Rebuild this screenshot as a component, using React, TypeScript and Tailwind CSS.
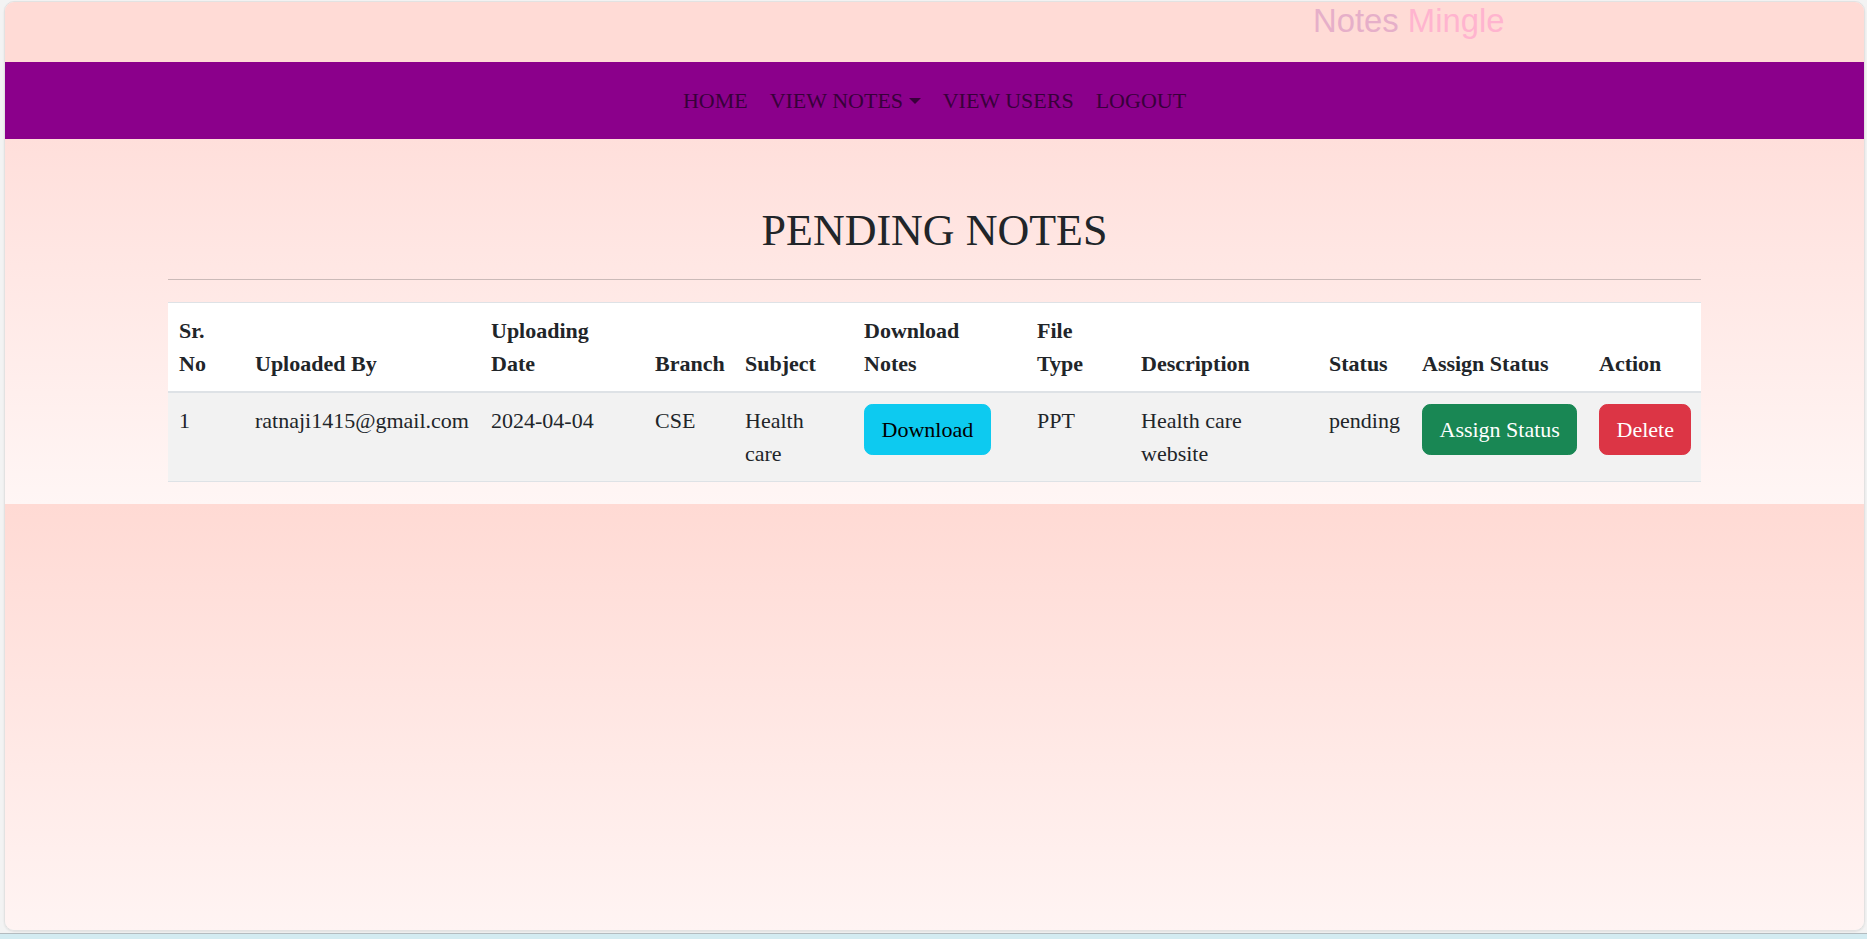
import React from "react";

const cols = [76, 236, 164, 90, 119, 173, 104, 188, 93, 177, 113];

const headers = [
  "Sr. No",
  "Uploaded By",
  "Uploading Date",
  "Branch",
  "Subject",
  "Download Notes",
  "File Type",
  "Description",
  "Status",
  "Assign Status",
  "Action",
];

export default function App() {
  return (
    <div className="w-[1867px] h-[939px] bg-[#f3f3f3] flex flex-col overflow-hidden font-['Liberation_Serif',serif] text-[#212529]">
      <div className="pt-[1px] pl-[4px]">
        <div className="w-[1861px] h-[930px] rounded-[10px] overflow-hidden border border-[#e2e2e2] shadow-[0_1px_2px_rgba(0,0,0,0.08)] flex flex-col">
          {/* top band with marquee text */}
          <div className="h-[60px] bg-[#ffdbd6] pt-[3px] pl-[1308px]">
            <div className="text-[32.8px] leading-[32px] font-['Liberation_Sans',Arial,sans-serif] whitespace-nowrap">
              <span className="text-[#e6afc9]">Notes</span>{" "}
              <span className="text-[#ffb4cf]">Mingle</span>
            </div>
          </div>
          {/* nav */}
          <nav className="h-[77px] bg-[#8b008b] flex items-center justify-center">
            <ul className="flex items-center text-[22px] leading-[33px] text-[#38003a]">
              <li className="px-[11px]">HOME</li>
              <li className="px-[11px] flex items-center">
                VIEW NOTES
                <span className="ml-[5.6px] inline-block w-0 h-0 border-t-[6.6px] border-t-[#38003a] border-l-[6.6px] border-l-transparent border-r-[6.6px] border-r-transparent" />
              </li>
              <li className="px-[11px]">VIEW USERS</li>
              <li className="px-[11px]">LOGOUT</li>
            </ul>
          </nav>
          {/* main section */}
          <section className="bg-gradient-to-b from-[#ffdfdb] to-[#fff6f5] pt-[66px]">
            <div className="w-[1533px] mx-auto">
              <h2 className="text-[44px] leading-[52.8px] text-center text-[#212529]">
                PENDING NOTES
              </h2>
              <hr className="mt-[21px] mb-[22px] border-0 border-t border-[#cbbab8]" />
              <table className="w-[1533px] table-fixed border-collapse border-t border-[#dee2e6] mb-[22px] text-[22px] leading-[33px]">
                <colgroup>
                  {cols.map((w, i) => (
                    <col key={i} style={{ width: w }} />
                  ))}
                </colgroup>
                <thead className="bg-white">
                  <tr className="border-b-2 border-[#dee2e6]">
                    {headers.map((h) => (
                      <th
                        key={h}
                        className="px-[11px] py-[11px] text-left align-bottom font-bold"
                      >
                        {h}
                      </th>
                    ))}
                  </tr>
                </thead>
                <tbody>
                  <tr className="bg-[#f2f2f2] border-b border-[#dee2e6] align-top">
                    <td className="px-[11px] py-[11px]">1</td>
                    <td className="px-[11px] py-[11px]">ratnaji1415@gmail.com</td>
                    <td className="px-[11px] py-[11px]">2024-04-04</td>
                    <td className="px-[11px] py-[11px]">CSE</td>
                    <td className="px-[11px] py-[11px]">Health care</td>
                    <td className="px-[11px] py-[11px]">
                      <span className="inline-block px-[16.5px] py-[8.25px] border border-[#0dcaf0] bg-[#0dcaf0] text-black rounded-[8.25px] leading-[33px]">
                        Download
                      </span>
                    </td>
                    <td className="px-[11px] py-[11px]">PPT</td>
                    <td className="px-[11px] py-[11px]">Health care website</td>
                    <td className="px-[11px] py-[11px]">pending</td>
                    <td className="px-[11px] py-[11px]">
                      <span className="inline-block px-[16.5px] py-[8.25px] border border-[#198754] bg-[#198754] text-white rounded-[8.25px] leading-[33px] whitespace-nowrap">
                        Assign Status
                      </span>
                    </td>
                    <td className="px-[11px] py-[11px]">
                      <span className="inline-block px-[16.5px] py-[8.25px] border border-[#dc3545] bg-[#dc3545] text-white rounded-[8.25px] leading-[33px]">
                        Delete
                      </span>
                    </td>
                  </tr>
                </tbody>
              </table>
            </div>
          </section>
          <div className="flex-1 bg-gradient-to-b from-[#ffdad4] to-[#fff4f3]" />
        </div>
      </div>
      <div className="mt-[2px] h-[6px] border-t border-[#b3bbbf] bg-[#d3ebf1]" />
    </div>
  );
}
